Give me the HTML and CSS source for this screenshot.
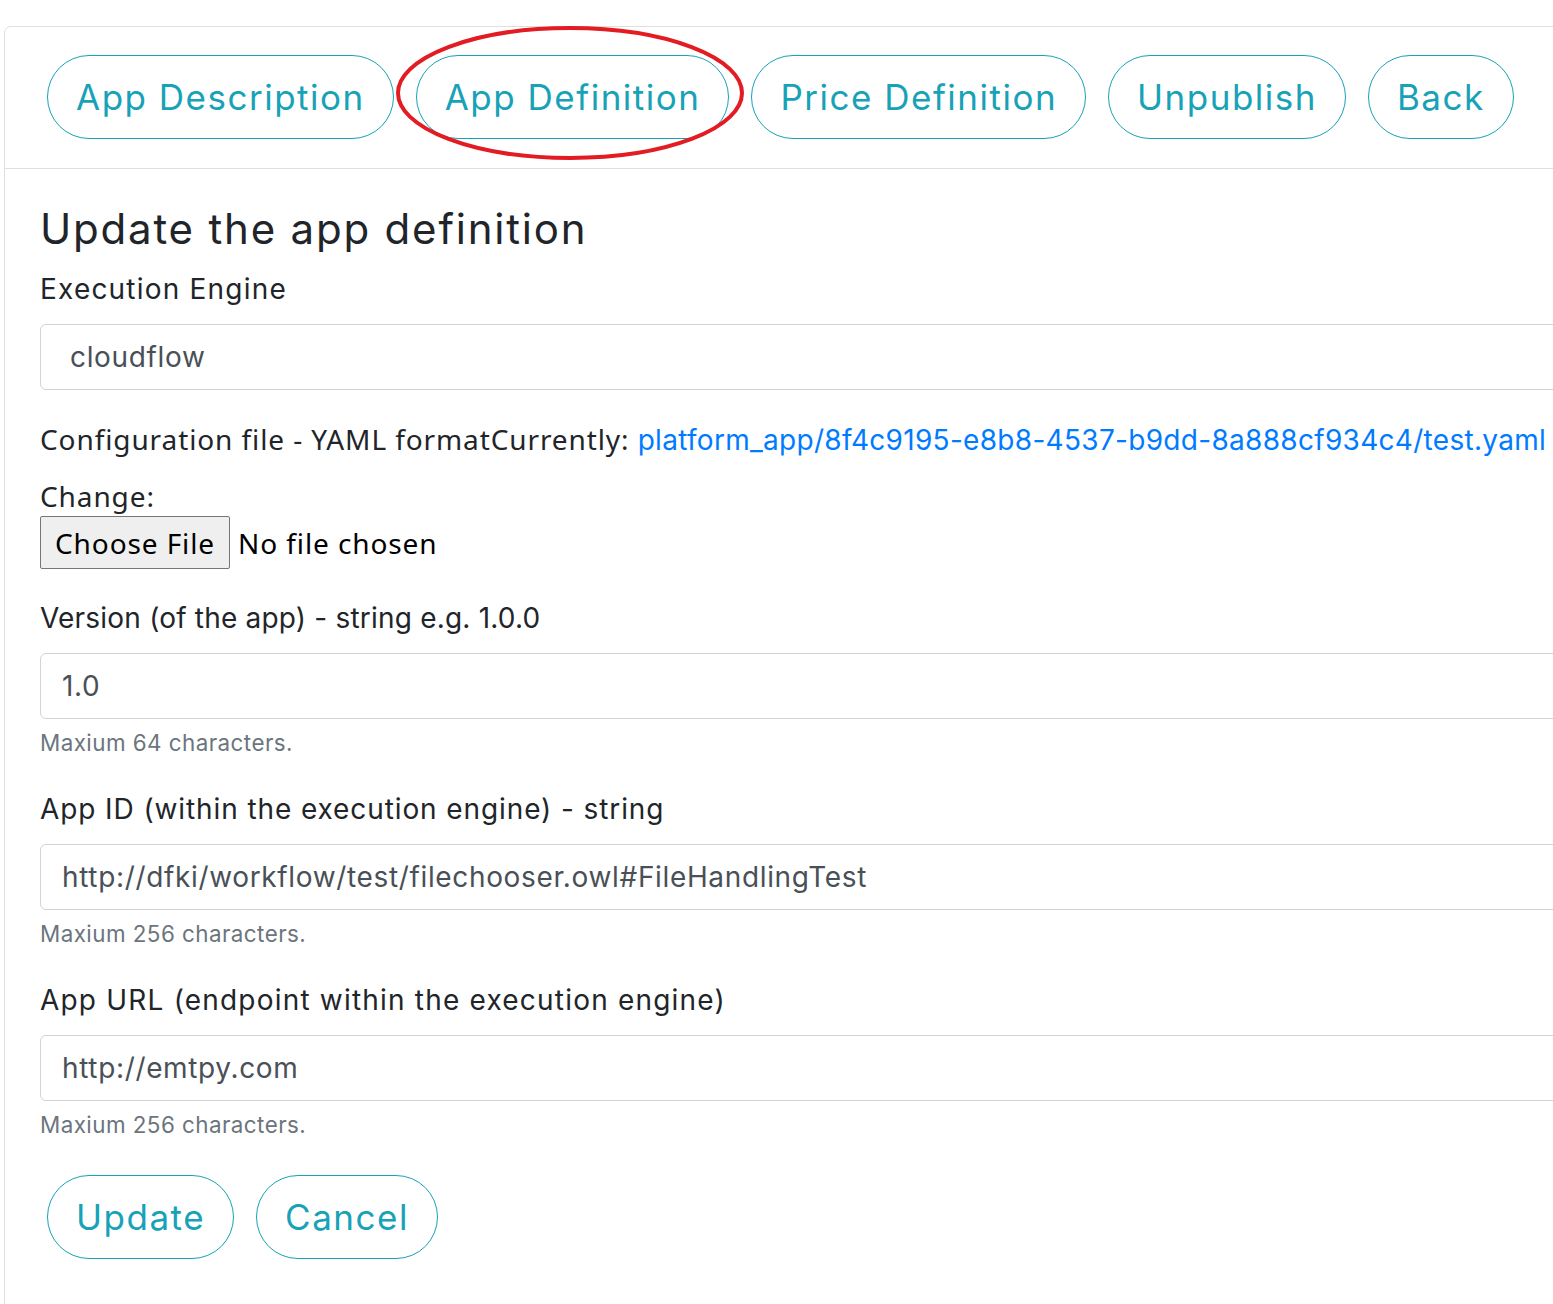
FILE: index.html
```html
<!DOCTYPE html>
<html lang="en">
<head>
<meta charset="utf-8">
<title>Update the app definition</title>
<link rel="stylesheet" href="styles.css">
</head>
<body>
<div class="card">
  <div class="card-header">
    <nav class="tabs">
      <a class="pill" href="#">App Description</a>
      <span class="marked">
        <a class="pill" href="#">App Definition</a>
        <svg class="annot" width="348" height="134" viewBox="0 0 348 134" aria-hidden="true"><ellipse cx="174" cy="67" rx="172" ry="65" fill="none" stroke="#e31b23" stroke-width="4"/></svg>
      </span>
      <a class="pill" href="#">Price Definition</a>
      <a class="pill" href="#">Unpublish</a>
      <a class="pill" href="#">Back</a>
    </nav>
  </div>
  <div class="card-body">
    <h4 class="title">Update the app definition</h4>
    <form class="form">
      <div class="group">
        <label class="label">Execution Engine</label>
        <div class="control control-select">cloudflow</div>
      </div>
      <div class="group">
        <label class="label label-sys">Configuration file - YAML formatCurrently: <a class="link" href="#">platform_app/8f4c9195-e8b8-4537-b9dd-8a888cf934c4/test.yaml</a></label>
        <label class="label label-sys">Change:</label>
        <div class="file"><span class="file-btn">Choose File</span><span class="file-name">No file chosen</span></div>
      </div>
      <div class="group">
        <label class="label label-narrow">Version (of the app) - string e.g. 1.0.0</label>
        <div class="control">1.0</div>
        <small class="hint">Maxium 64 characters.</small>
      </div>
      <div class="group">
        <label class="label label-mid">App ID (within the execution engine) - string</label>
        <div class="control">http://dfki/workflow/test/filechooser.owl#FileHandlingTest</div>
        <small class="hint">Maxium 256 characters.</small>
      </div>
      <div class="group">
        <label class="label">App URL (endpoint within the execution engine)</label>
        <div class="control">http://emtpy.com</div>
        <small class="hint">Maxium 256 characters.</small>
      </div>
      <div class="actions">
        <a class="pill" href="#">Update</a>
        <a class="pill" href="#">Cancel</a>
      </div>
    </form>
  </div>
</div>
</body>
</html>
```
FILE: styles.css
```css
html, body {
  margin: 0;
  padding: 0;
  overflow: hidden;
  background: #fff;
}
body {
  font-family: Inter, "Liberation Sans", sans-serif;
  font-size: 28px;
  line-height: 1.5;
  letter-spacing: 1.2px;
  color: #212529;
}
.card {
  margin: 26px 0 0 4px;
  width: 1700px;
  border: 1px solid #dfdfdf;
  border-radius: 7px;
  background: #fff;
}
.card-header {
  padding: 28px 0 29px 42px;
  border-bottom: 1px solid #dfdfdf;
}
.tabs {
  display: flex;
  gap: 22px;
}
.pill {
  display: inline-flex;
  align-items: center;
  justify-content: center;
  box-sizing: border-box;
  height: 84px;
  padding: 0 28px;
  border: 1px solid #17a2b8;
  border-radius: 42px;
  color: #17a2b8;
  font-size: 35px;
  letter-spacing: 1.5px;
  text-decoration: none;
  white-space: nowrap;
}
.marked {
  position: relative;
  display: inline-flex;
}
.annot {
  position: absolute;
  left: -20px;
  top: -29px;
  pointer-events: none;
}
.card-body {
  padding: 35px 35px 120px;
}
.title {
  margin: 0 0 14px;
  font-size: 42px;
  line-height: 1.2;
  font-weight: 400;
  letter-spacing: 1.8px;
}
.group {
  margin-bottom: 28px;
}
.label {
  display: block;
  margin-bottom: 14px;
}
.label-narrow {
  letter-spacing: 0.2px;
}
.label-mid {
  letter-spacing: 0.9px;
}
.label-sys {
  font-family: "Noto Sans", "Open Sans", sans-serif;
  letter-spacing: 0.9px;
}
.label-sys + .label-sys {
  margin-bottom: 0;
}
.link {
  color: #007bff;
  text-decoration: none;
  font-family: Inter, "Liberation Sans", sans-serif;
  letter-spacing: 0.3px;
}
.control {
  box-sizing: border-box;
  height: 66px;
  padding: 0 21px;
  border: 1px solid #ced4da;
  border-radius: 6px;
  color: #495057;
  display: flex;
  align-items: center;
  white-space: nowrap;
  letter-spacing: 0.65px;
}
.control-select {
  padding-left: 29px;
}
.hint {
  display: block;
  margin-top: 7px;
  font-size: 22.4px;
  letter-spacing: 0.45px;
  color: #6c757d;
}
.file {
  display: flex;
  align-items: center;
  margin-top: -1px;
  font-family: "Noto Sans", "Open Sans", sans-serif;
  letter-spacing: 0.9px;
}
.file-btn {
  box-sizing: border-box;
  height: 53px;
  padding: 0 14px;
  display: inline-flex;
  align-items: center;
  background: #efefef;
  border: 1px solid #767676;
  border-radius: 2px;
  color: #000;
}
.file-name {
  margin-left: 8px;
  color: #000;
}
.actions {
  display: flex;
  gap: 22px;
  padding: 6px 0 0 7px;
}
```
